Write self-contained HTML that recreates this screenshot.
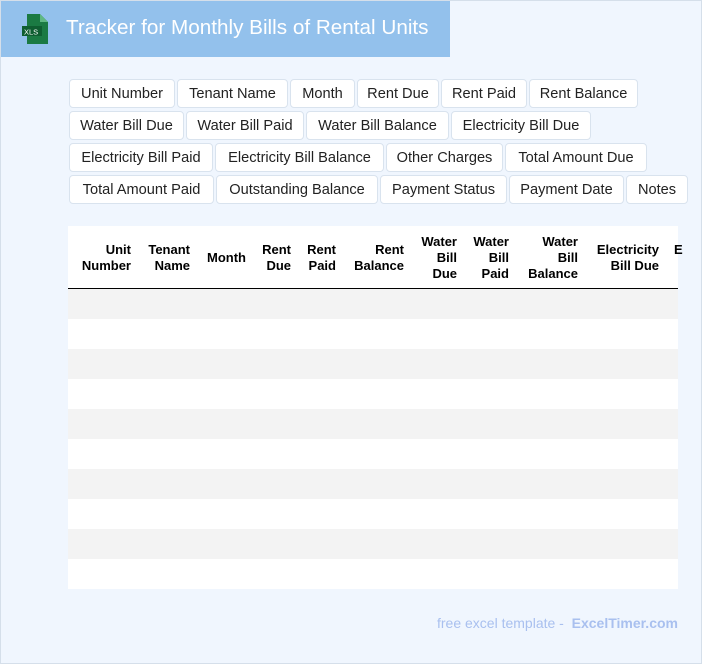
<!DOCTYPE html>
<html><head><style>
*{margin:0;padding:0;box-sizing:border-box}
body{width:702px;height:664px;background:#f0f6fe;position:relative;overflow:hidden;font-family:"Liberation Sans",sans-serif}
.bd{position:absolute;left:0;top:0;width:702px;height:664px;border:1px solid #d5dfea;pointer-events:none}
.hd{position:absolute;left:0;top:0;width:450px;height:57px;background:#93c1ec}
.hd .t{position:absolute;left:66px;top:16px;color:#fff;font-size:20.7px}
.c{position:absolute;height:29px;background:#fff;border:1px solid #d9e3ee;border-radius:4px;font-size:14.6px;color:#222;text-align:center;line-height:28px;white-space:nowrap}
.tb{position:absolute;left:68px;top:226px;width:610px;height:363px;background:#fff}
.h{position:absolute;font-weight:bold;font-size:13px;line-height:16px;color:#000;text-align:right;white-space:nowrap}
.r{position:absolute;left:0;width:610px;height:30px;background:#f3f3f3}
.f{position:absolute;left:437px;top:615px;font-size:14px;color:#a9c0ef}
</style></head><body>
<div class="hd">
<svg style="position:absolute;left:21px;top:13px" width="30" height="32" viewBox="0 0 30 32"><path d="M6 1h13l8 8v22H6z" fill="#1b7a43"/><path d="M19 1v8h8z" fill="#5fb883"/><rect x="1" y="13" width="20" height="10" fill="#0f5e31"/><text x="3" y="21.5" font-size="7.5" fill="#fff" font-family="Liberation Sans">XLS</text></svg>
<div class="t">Tracker for Monthly Bills of Rental Units</div></div>

<div class="c" style="left:69px;top:79px;width:106px">Unit Number</div>
<div class="c" style="left:177px;top:79px;width:111px">Tenant Name</div>
<div class="c" style="left:290px;top:79px;width:65px">Month</div>
<div class="c" style="left:357px;top:79px;width:82px">Rent Due</div>
<div class="c" style="left:441px;top:79px;width:86px">Rent Paid</div>
<div class="c" style="left:529px;top:79px;width:109px">Rent Balance</div>
<div class="c" style="left:69px;top:111px;width:115px">Water Bill Due</div>
<div class="c" style="left:186px;top:111px;width:118px">Water Bill Paid</div>
<div class="c" style="left:306px;top:111px;width:143px">Water Bill Balance</div>
<div class="c" style="left:451px;top:111px;width:140px">Electricity Bill Due</div>
<div class="c" style="left:69px;top:143px;width:144px">Electricity Bill Paid</div>
<div class="c" style="left:215px;top:143px;width:169px">Electricity Bill Balance</div>
<div class="c" style="left:386px;top:143px;width:117px">Other Charges</div>
<div class="c" style="left:505px;top:143px;width:142px">Total Amount Due</div>
<div class="c" style="left:69px;top:175px;width:145px">Total Amount Paid</div>
<div class="c" style="left:216px;top:175px;width:162px">Outstanding Balance</div>
<div class="c" style="left:380px;top:175px;width:127px">Payment Status</div>
<div class="c" style="left:509px;top:175px;width:115px">Payment Date</div>
<div class="c" style="left:626px;top:175px;width:62px">Notes</div>

<div class="tb">
<div class="h" style="right:547px;top:16px">Unit<br>Number</div>
<div class="h" style="right:488px;top:16px">Tenant<br>Name</div>
<div class="h" style="right:432px;top:24px">Month</div>
<div class="h" style="right:387px;top:16px">Rent<br>Due</div>
<div class="h" style="right:342px;top:16px">Rent<br>Paid</div>
<div class="h" style="right:274px;top:16px">Rent<br>Balance</div>
<div class="h" style="right:221px;top:8px">Water<br>Bill<br>Due</div>
<div class="h" style="right:169px;top:8px">Water<br>Bill<br>Paid</div>
<div class="h" style="right:100px;top:8px">Water<br>Bill<br>Balance</div>
<div class="h" style="right:19px;top:16px">Electricity<br>Bill Due</div>
<div class="h" style="left:606px;top:16px">E</div>
<div style="position:absolute;left:0;top:62px;width:610px;height:1px;background:#000"></div>
<div class="r" style="top:63px"></div>
<div class="r" style="top:123px"></div>
<div class="r" style="top:183px"></div>
<div class="r" style="top:243px"></div>
<div class="r" style="top:303px"></div>
</div>
<div class="f">free excel template - &nbsp;<b>ExcelTimer.com</b></div>
<div class="bd"></div>
</body></html>
